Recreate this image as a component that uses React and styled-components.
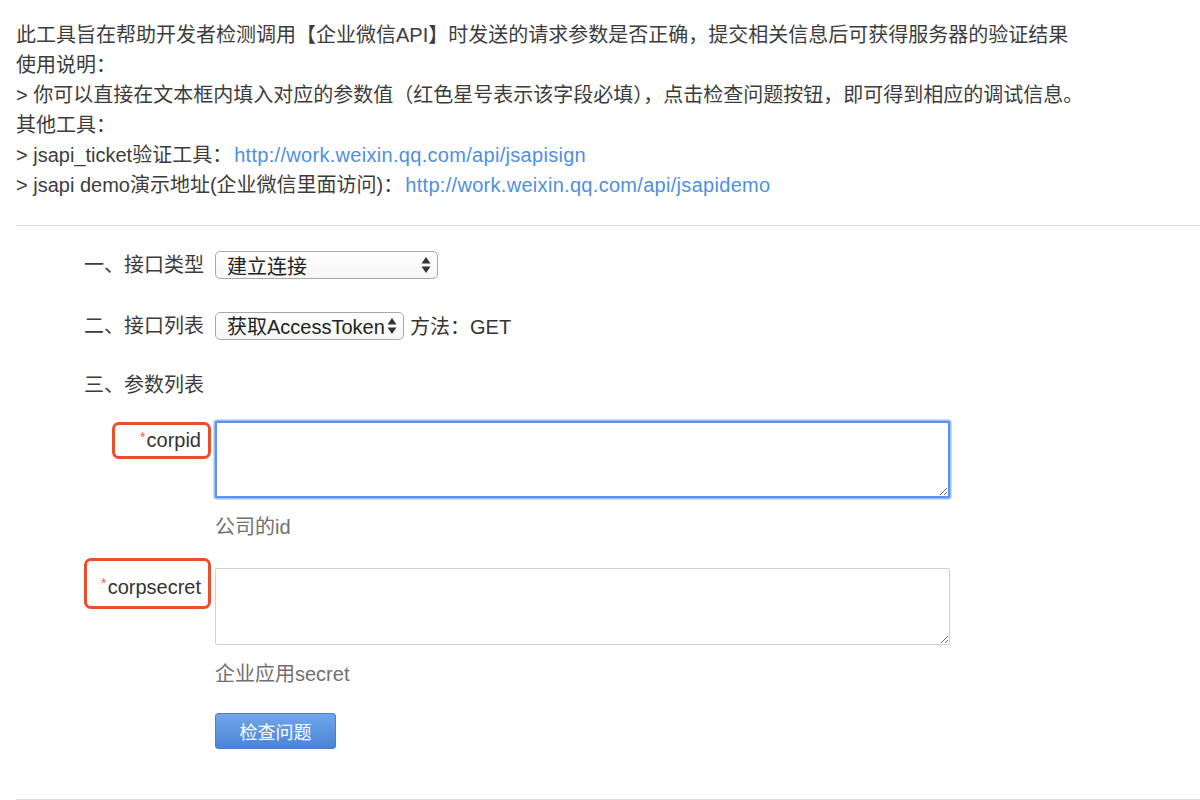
import React from 'react'
import styled, { createGlobalStyle } from 'styled-components'

const GlobalStyle = createGlobalStyle`
  body {
    margin: 0;
    background: #fff;
    font-family: "Liberation Sans", "Noto Sans CJK SC", sans-serif;
    color: #3c3c3c;
  }
`

function Arrows() {
  return (
    <svg width="10" height="18" viewBox="0 0 10 18">
      <path d="M5 1 L9.5 7.5 L0.5 7.5 Z" fill="#333" />
      <path d="M5 17 L9.5 10.5 L0.5 10.5 Z" fill="#333" />
    </svg>
  )
}

function App() {
  return (
    <Page>
      <GlobalStyle />
      <Intro>
        <Line>此工具旨在帮助开发者检测调用【企业微信API】时发送的请求参数是否正确，提交相关信息后可获得服务器的验证结果</Line>
        <Line>使用说明：</Line>
        <Line>&gt; 你可以直接在文本框内填入对应的参数值（红色星号表示该字段必填），点击检查问题按钮，即可得到相应的调试信息。</Line>
        <Line>其他工具：</Line>
        <Line>&gt; jsapi_ticket验证工具：<Link>http://work.weixin.qq.com/api/jsapisign</Link></Line>
        <Line>&gt; jsapi demo演示地址(企业微信里面访问)：<Link>http://work.weixin.qq.com/api/jsapidemo</Link></Line>
      </Intro>
      <Divider />
      <Form>
        <Row>
          <StepLabel>一、接口类型</StepLabel>
          <Select $w={223}>
            <span>建立连接</span>
            <Arrows />
          </Select>
        </Row>
        <Row $mt={32}>
          <StepLabel>二、接口列表</StepLabel>
          <Inline>
            <Select $w={189}>
              <span>获取AccessToken</span>
              <Arrows />
            </Select>
            <Method>方法：GET</Method>
          </Inline>
        </Row>
        <Section>三、参数列表</Section>
        <Row $mt={21} $top>
          <LabelCell>
            <ParamLabel $w={99} $h={37} $mt={1}>
              <Star>*</Star>corpid
            </ParamLabel>
          </LabelCell>
          <Field>
            <TextBox $focused />
            <Hint>公司的id</Hint>
          </Field>
        </Row>
        <Row $mt={26} $top>
          <LabelCell>
            <ParamLabel $w={127} $h={51} $mt={-10} $pt={7}>
              <Star>*</Star>corpsecret
            </ParamLabel>
          </LabelCell>
          <Field>
            <TextBox />
            <Hint>企业应用secret</Hint>
          </Field>
        </Row>
        <Row $mt={24}>
          <span />
          <Button>检查问题</Button>
        </Row>
      </Form>
      <Divider $mt={50} />
    </Page>
  )
}

export default App

const Page = styled.div`
  width: 1200px;
  height: 800px;
  overflow: hidden;
  font-size: 20px;
`

const Intro = styled.div`
  padding: 20px 0 0 16px;
`

const Line = styled.div`
  line-height: 30px;
  white-space: nowrap;
`

const Link = styled.span`
  color: #4f8fde;
  letter-spacing: 0.3px;
  margin-left: 2px;
`

const Divider = styled.div`
  margin: ${props => props.$mt || 25}px 0 0 16px;
  height: 1px;
  background: #dedede;
`

const Form = styled.div`
  padding: 25px 0 0 84px;
`

const Row = styled.div`
  display: grid;
  grid-template-columns: 131px 1fr;
  align-items: ${props => (props.$top ? 'start' : 'center')};
  margin-top: ${props => props.$mt || 0}px;
`

const StepLabel = styled.div`
  line-height: 28px;
`

const Inline = styled.div`
  display: flex;
  align-items: center;
  gap: 6px;
`

const Select = styled.div`
  box-sizing: border-box;
  width: ${props => props.$w}px;
  height: 28px;
  display: flex;
  align-items: center;
  justify-content: space-between;
  padding: 0 6px 0 11px;
  border: 1px solid #a9a9a9;
  border-radius: 5px;
  background: linear-gradient(#ffffff, #f6f6f6);
  color: #222;
  white-space: nowrap;
`

const Method = styled.span`
  color: #333;
`

const Section = styled.div`
  margin-top: 30px;
  line-height: 30px;
`

const LabelCell = styled.div`
  display: flex;
  justify-content: flex-end;
  padding-right: 4px;
`

const ParamLabel = styled.div`
  box-sizing: border-box;
  width: ${props => props.$w}px;
  height: ${props => props.$h}px;
  margin-top: ${props => props.$mt}px;
  padding: ${props => props.$pt || 0}px 7px 0 0;
  display: flex;
  align-items: center;
  justify-content: flex-end;
  border: 3px solid #ea4f2c;
  border-radius: 7px;
  color: #333;
`

const Star = styled.span`
  color: #e86a5a;
  font-size: 15px;
  align-self: center;
  margin-top: -9px;
  margin-right: 1px;
`

const Field = styled.div`
  display: flex;
  flex-direction: column;
`

const TextBox = styled.textarea`
  box-sizing: border-box;
  width: 735px;
  height: 77px;
  margin: 0;
  border: ${props => (props.$focused ? '2px solid #5d93ec' : '1px solid #d0d0d0')};
  box-shadow: ${props => (props.$focused ? '0 0 0 1.5px #9bbdf4' : 'none')};
  border-radius: 2px;
  outline: none;
  font-family: inherit;
  font-size: 16px;
`

const Hint = styled.div`
  margin-top: 14px;
  line-height: 30px;
  color: #707070;
`

const Button = styled.div`
  box-sizing: border-box;
  width: 121px;
  height: 36px;
  display: flex;
  align-items: center;
  justify-content: center;
  border: 1px solid #4a7ec9;
  border-radius: 3px;
  background: linear-gradient(#72a6ea, #4a84d6);
  color: #fff;
  font-size: 18px;
`
